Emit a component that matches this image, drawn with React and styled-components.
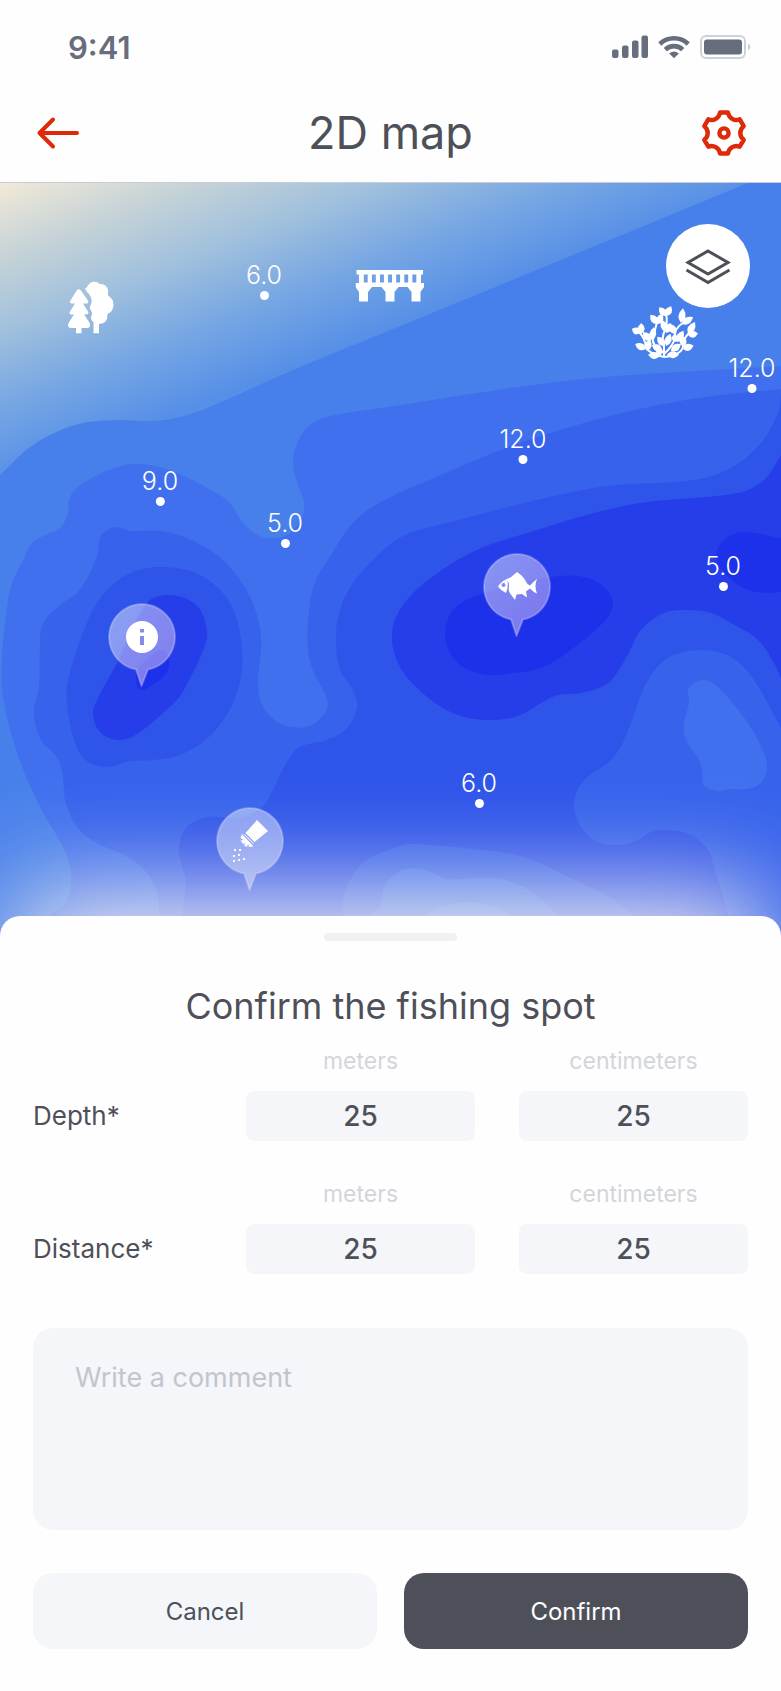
import React, { useState } from 'react'
import styled, { createGlobalStyle } from 'styled-components'

const GlobalStyle = createGlobalStyle`
  * {
    box-sizing: border-box;
  }
  body {
    margin: 0;
    background: #fefefe;
    color: #4e5059;
    font-family: Inter, 'Open Sans', sans-serif;
  }
  button, input, textarea {
    font-family: inherit;
    color: inherit;
  }
`

const Screen = styled.div`
  display: flex;
  flex-direction: column;
`

const StatusBar = styled.div`
  display: flex;
  align-items: center;
  justify-content: space-between;
  height: 83px;
  padding: 11px 30px 0 68px;
  color: #666d7d;
`

const Clock = styled.span`
  font-size: 31px;
  font-weight: 600;
`

const StatusIcons = styled.div`
  display: flex;
  align-items: center;
  gap: 10px;
`

const Header = styled.header`
  display: flex;
  align-items: center;
  justify-content: space-between;
  height: 100px;
  padding: 0 34px;
  border-bottom: 1px solid #c9ccd6;
`

const PageTitle = styled.h1`
  margin: 0;
  font-size: 45px;
  font-weight: 400;
`

const IconButton = styled.button`
  display: flex;
  padding: 0;
  border: none;
  background: none;
  color: #de2a0a;
  cursor: pointer;
`

const MapArea = styled.section`
  position: relative;
`

const MapDrawing = styled.svg`
  display: block;
  width: 100%;
  height: auto;
`

// x and y are in map units, see MAP_WIDTH and MAP_HEIGHT
const Placed = styled.div`
  position: absolute;
  left: ${({ $x }) => ($x / MAP_WIDTH) * 100}%;
  top: ${({ $y }) => ($y / MAP_HEIGHT) * 100}%;
`

const Landmark = styled(Placed)`
  display: flex;
  transform: translate(-50%, -50%);
`

const DepthMark = styled(Placed)`
  display: flex;
  flex-direction: column;
  align-items: center;
  gap: 1px;
  transform: translate(-50%, -100%);
  color: white;
  font-size: 25px;
  font-weight: 300;
  line-height: 30px;
  &::after {
    content: '';
    width: 9px;
    height: 9px;
    border-radius: 50%;
    background: white;
  }
`

const PinButton = styled(Placed)`
  display: flex;
  padding: 0;
  border: none;
  background: none;
  transform: translate(-50%, -100%);
  cursor: pointer;
`

const LayersButton = styled.button`
  position: absolute;
  top: 41px;
  right: 31px;
  display: flex;
  align-items: center;
  justify-content: center;
  width: 84px;
  height: 84px;
  padding: 0;
  border: none;
  border-radius: 50%;
  background: white;
  cursor: pointer;
`

const Sheet = styled.form`
  position: relative;
  display: flex;
  flex-direction: column;
  margin-top: -24px;
  padding: 17px 33px 42px;
  border-radius: 20px 20px 0 0;
  background: #fefefe;
  box-shadow: 0 -36px 104px -12px #f0edef;
`

const Handle = styled.div`
  align-self: center;
  width: 133px;
  height: 8px;
  border-radius: 4px;
  background: #eff1f3;
`

const SheetTitle = styled.h2`
  margin: 43px 0 21px;
  font-size: 36px;
  font-weight: 400;
  line-height: 44px;
  text-align: center;
`

const Measures = styled.div`
  display: flex;
  flex-direction: column;
  gap: 41px;
`

const MeasureRow = styled.div`
  display: grid;
  grid-template-columns: 169px 1fr 1fr;
  align-items: end;
  gap: 44px;
`

const MeasureName = styled.span`
  font-size: 26px;
  font-weight: 400;
  line-height: 50px;
`

const UnitField = styled.label`
  display: flex;
  flex-direction: column;
  gap: 18px;
  color: #d3d5db;
  font-size: 23px;
  font-weight: 400;
  line-height: 24px;
  text-align: center;
`

const UnitInput = styled.input`
  width: 100%;
  height: 50px;
  padding: 0;
  border: none;
  border-radius: 8px;
  background: #f4f6fa;
  color: #4e5059;
  font-size: 28px;
  font-weight: 500;
  text-align: center;
`

const Comment = styled.textarea`
  width: 100%;
  height: 202px;
  margin-top: 54px;
  padding: 33px 42px;
  border: none;
  border-radius: 20px;
  background: #f4f6fa;
  font-size: 27px;
  line-height: 34px;
  resize: none;
  &::placeholder {
    color: #c2c5cd;
    opacity: 1;
  }
`

const Actions = styled.div`
  display: grid;
  grid-template-columns: 1fr 1fr;
  gap: 27px;
  margin-top: 43px;
`

const ActionButton = styled.button`
  height: 76px;
  border: none;
  border-radius: 20px;
  background: ${({ $primary }) => ($primary ? '#4e5059' : '#f4f6fa')};
  color: ${({ $primary }) => ($primary ? '#fefefe' : '#4e5059')};
  font-size: 24px;
  font-weight: 400;
  cursor: pointer;
`

const MAP_WIDTH = 781
const MAP_HEIGHT = 757

// turns a list of points into a rounded line that goes through all of them
const smooth = (points, closed) => {
  const n = points.length
  const at = (i) => (closed ? points[(i + n) % n] : points[Math.max(0, Math.min(n - 1, i))])
  let d = `M${points[0].join(' ')}`
  for (let i = 0; i < (closed ? n : n - 1); i++) {
    const [p0, p1, p2, p3] = [at(i - 1), at(i), at(i + 1), at(i + 2)]
    // handles scale with the segment, so uneven points don't make loops
    const len = Math.hypot(p2[0] - p1[0], p2[1] - p1[1])
    const t1 = Math.hypot(p2[0] - p0[0], p2[1] - p0[1]) || 1
    const t2 = Math.hypot(p3[0] - p1[0], p3[1] - p1[1]) || 1
    const c = [
      p1[0] + ((p2[0] - p0[0]) / t1) * len * 0.34,
      p1[1] + ((p2[1] - p0[1]) / t1) * len * 0.34,
      p2[0] - ((p3[0] - p1[0]) / t2) * len * 0.34,
      p2[1] - ((p3[1] - p1[1]) / t2) * len * 0.34
    ]
    d += `C${c.map((v) => v.toFixed(1)).join(' ')} ${p2.join(' ')}`
  }
  return closed ? d + 'Z' : d
}

const levels = ['#4880eb', '#4070ee', '#3662ec', '#2e54ea', '#263eea', '#1e31ea']

// `end` closes an open contour along the edges of the map
const contours = [
  {
    level: 0,
    end: 'H781V940H0Z',
    points: [[0, 475], [33, 445], [75, 425], [117, 420], [153, 421], [180, 417], [207, 408], [293, 370], [381, 334], [748, 183]]
  },
  {
    level: 1,
    end: 'V940H40Z',
    points: [
      [40, 930], [50, 916], [67, 900], [71, 873], [63, 847], [40, 807], [17, 753], [3, 697], [2, 657], [7, 607], [12, 583],
      [23, 560], [32, 543], [47, 534], [60, 528], [68, 513], [69, 499], [80, 485], [117, 467], [143, 464], [177, 473], [223, 497], [233, 507],
      [243, 523], [263, 537], [287, 535], [302, 517], [304, 502], [298, 485], [293, 463], [297, 443], [310, 425],
      [330, 416], [381, 408], [574, 380], [781, 366]
    ]
  },
  {
    level: 2,
    end: 'V940Z',
    points: [
      [159, 940], [159, 916], [158, 897], [150, 877], [130, 858], [97, 843], [77, 827], [65, 800], [63, 777], [57, 757], [43, 743],
      [36, 727], [34, 710], [39, 687], [40, 643], [43, 623], [60, 605], [77, 593], [90, 573], [98, 553], [99, 541], [104, 532],
      [117, 527], [130, 531], [160, 531], [187, 538], [223, 560], [250, 597], [261, 637], [258, 687], [263, 707],
      [277, 722], [292, 727], [310, 726], [325, 713], [328, 703], [323, 690], [312, 668], [308, 650], [308, 623],
      [314, 585], [328, 560], [353, 523], [381, 502], [441, 475], [514, 445], [614, 415], [698, 398], [781, 389]
    ]
  },
  {
    level: 3,
    end: 'V940Z',
    points: [
      [181, 940], [182, 916], [186, 883], [182, 865], [179, 847], [187, 827], [207, 817], [240, 818], [263, 806], [273, 790],
      [287, 762], [300, 747], [327, 740], [347, 728], [357, 707], [353, 690], [340, 670], [336, 637], [340, 610],
      [353, 583], [377, 556], [401, 537], [431, 527], [594, 488], [694, 480], [731, 468], [761, 443], [778, 413], [781, 397]
    ]
  },
  {
    level: 3,
    points: [
      [163, 567], [200, 575], [230, 603], [242, 650], [237, 693], [213, 733], [180, 755], [153, 760], [130, 761], [107, 767],
      [87, 761], [75, 743], [67, 703], [68, 680], [88, 620], [107, 590], [133, 572]
    ]
  },
  {
    level: 4,
    points: [
      [170, 595], [197, 606], [207, 632], [202, 653], [185, 688], [175, 702], [137, 734], [118, 740], [100, 732], [93, 713],
      [97, 700], [117, 663], [147, 603]
    ]
  },
  { level: 5, points: [[160, 650], [169, 658], [166, 674], [148, 688], [142, 690], [137, 686], [138, 670]] },
  {
    level: 4,
    end: 'V455Z',
    points: [
      [781, 455], [764, 480], [738, 493], [628, 505], [504, 540], [481, 548], [451, 564], [414, 592], [396, 617], [392, 640],
      [398, 663], [411, 682], [438, 705], [464, 717], [491, 720], [518, 716], [541, 703], [558, 695], [581, 693],
      [608, 683], [626, 658], [641, 630], [664, 613], [688, 610], [711, 613], [731, 623], [758, 640], [774, 663], [781, 678]
    ]
  },
  {
    level: 5,
    points: [
      [551, 577], [584, 577], [604, 587], [613, 603], [604, 622], [561, 657], [538, 669], [514, 673], [488, 675], [461, 666],
      [446, 643], [448, 619], [458, 605], [484, 593]
    ]
  },
  { level: 5, end: 'Z', points: [[781, 538], [741, 532], [724, 540], [716, 557], [728, 577], [748, 590], [768, 593], [781, 592]] },
  {
    level: 2,
    end: 'H781V728Z',
    points: [
      [781, 728], [754, 680], [731, 657], [699, 650], [668, 658], [648, 680], [624, 740], [611, 760], [584, 780], [574, 803],
      [581, 827], [598, 842], [618, 845], [638, 840], [651, 832], [668, 830], [691, 835], [708, 850], [714, 867],
      [724, 900], [735, 940]
    ]
  },
  {
    level: 1,
    points: [
      [704, 680], [718, 687], [748, 723], [764, 753], [767, 770], [761, 783], [748, 789], [731, 789], [719, 791], [704, 785],
      [702, 770], [698, 758], [686, 740], [684, 723], [689, 703], [688, 690], [694, 683]
    ]
  },
  {
    level: 2,
    end: 'Z',
    points: [
      [345, 940], [343, 900], [350, 880], [367, 860], [400, 846], [411, 844], [464, 848], [524, 857], [568, 877],
      [614, 900], [660, 940]
    ]
  },
  {
    level: 1,
    end: 'Z',
    points: [
      [350, 940], [370, 916], [380, 907], [384, 887], [398, 872], [414, 868], [431, 872], [448, 879], [494, 878],
      [524, 887], [544, 902], [580, 940]
    ]
  },
  { level: 0, end: 'Z', points: [[400, 940], [424, 916], [441, 907], [468, 902], [494, 907], [511, 916], [530, 940]] }
]

const depthMarks = [
  { x: 264, y: 117, depth: '6.0' },
  { x: 160, y: 323, depth: '9.0' },
  { x: 285, y: 365, depth: '5.0' },
  { x: 523, y: 281, depth: '12.0' },
  { x: 752, y: 210, depth: '12.0' },
  { x: 723, y: 408, depth: '5.0' },
  { x: 479, y: 625, depth: '6.0' }
]

// x, y, angle, length
const leaves = [
  [41, 16, -38, 11], [41, 16, 28, 11],
  [33, 24, -40, 12], [33, 24, 22, 11],
  [56, 23, 8, 15], [57, 24, 58, 13],
  [15, 33, -62, 9], [16, 34, 2, 11],
  [26, 41, -42, 12], [27, 40, 8, 13],
  [21, 49, -65, 12], [22, 51, 12, 12],
  [41, 32, -18, 13], [41, 33, 25, 11],
  [40, 46, -40, 12], [41, 46, 20, 13],
  [50, 34, -25, 11], [52, 42, 30, 13], [51, 42, -15, 8],
  [63, 34, 30, 14], [63, 35, 82, 10],
  [59, 47, -10, 12], [58, 49, 72, 11],
  [35, 56, -84, 12], [36, 55, -25, 8], [42, 55, 88, 12],
  [37, 50, -65, 11], [46, 51, 55, 12]
]

const PIN_PATH = 'M28 66.500A33 33 0 1 1 40 66.500L33.500 83Z'

const Pin = ({ x, y, label, tint, children }) => (
  <PinButton as='button' type='button' $x={x} $y={y} aria-label={label}>
    <svg width='68' height='84' viewBox='0 0 68 84' fill='white'>
      <path d={PIN_PATH} fill={tint} fillOpacity='0.44' stroke='white' strokeOpacity='0.24' strokeWidth='2' />
      {children}
    </svg>
  </PinButton>
)

const Contours = () => (
  <MapDrawing viewBox='0 183 781 757' aria-hidden='true'>
    <defs>
      <linearGradient id='shore' gradientUnits='userSpaceOnUse' x1='0' y1='183' x2='102' y2='443'>
        <stop offset='0' stopColor='#f2e9d8' />
        <stop offset='0.25' stopColor='#c6d3d7' />
        <stop offset='0.5' stopColor='#a0c0dd' />
        <stop offset='0.75' stopColor='#76a6e3' />
        <stop offset='1' stopColor='#568fe7' />
      </linearGradient>
      <linearGradient id='pin-tint' x1='0' y1='0' x2='1' y2='1'>
        <stop offset='0.1' stopColor='#ffffff' />
        <stop offset='0.7' stopColor='#f8dcf6' />
      </linearGradient>
    </defs>
    <rect y='183' width='781' height='757' fill='url(#shore)' />
    {contours.map(({ level, points, end }, i) => (
      <path key={i} d={smooth(points, !end) + (end || '')} fill={levels[level]} />
    ))}
  </MapDrawing>
)

const TreesIcon = () => (
  <svg width='46' height='53' viewBox='0 0 46 53' fill='white'>
    <path d='M9 9.500Q10.500 8 12.500 9.500L20 20Q21 23 18.500 23H15L20 31Q21.500 34 18 34H16L22 43Q23 47.500 19 47.500H13.500V53H8V47.500H3Q-1 47.500 0.500 42.500L6 34H3.500Q0.500 34 2 31L7 23H3.500Q1 22.500 2.500 20Z' />
    <path d='M17 8Q19 7 20 5A7 7 0 0 1 31.500 3.500Q39 3 40 10V15Q45.500 18 45.500 25Q45 31 39.500 33.500Q40 43 31 43.500V53H25.500V42Q22.500 40 23 36Q25 33 23 30Q20.500 27 23 24Q25 18 21 13.500Q19 12 17 8Z' />
  </svg>
)

const BridgeIcon = () => (
  <svg width='69' height='32' viewBox='0 0 69 32' fill='white'>
    <path
      fillRule='evenodd'
      d={
        'M1 0H67.500V4.500H65.500V13H68.500V17L65 22V31.500H56V22L52 17H43L39 22V31.500H30V22L26 17H16.500L12.500 22V31.500H3.500V22L0 17V13H3.500V4.500H1Z' +
        [0, 1, 2, 3, 4, 5, 6].map((i) => `M${8.3 + i * 8.1} 4.500h3.900v8h-3.900Z`).join('')
      }
    />
  </svg>
)

const SeaweedIcon = () => (
  <svg width='76' height='62' viewBox='0 0 76 62'>
    <g fill='none' stroke='white' strokeWidth='2'>
      <path d='M39 57V47Q36 38 40 30Q43 22 41 14' />
      <path d='M39 53Q26 45 28 38Q30 30 32 22' />
      <path d='M39 57Q24 54 21 47Q20 38 14 32' />
      <path d='M39 54Q48 46 50 38Q49 28 58 23' />
      <path d='M39 57Q56 55 58 47Q58 39 64 33' />
    </g>
    {leaves.map(([x, y, angle, length], i) => (
      <path
        key={i}
        fill='white'
        transform={`translate(${x} ${y}) rotate(${angle})`}
        d={`M0 0Q-7 ${-length * 0.45} 0 ${-length}Q7 ${-length * 0.45} 0 0Z`}
      />
    ))}
  </svg>
)

const LayersIcon = () => (
  <svg width='46' height='38' viewBox='0 0 46 38' fill='none' stroke='#4e5059' strokeWidth='3'>
    <path d='M23 4L43 15.500L23 27L3 15.500Z' />
    <path d='M1.500 23L23 35.500L44.500 23' />
  </svg>
)

const GearIcon = () => (
  <svg width='46' height='46' viewBox='-23 -23 46 46' fill='none' stroke='currentColor' strokeLinejoin='round'>
    <path
      strokeWidth='4.400'
      d='M-4 -20.500H4A8.500 8.500 0 0 0 15.700 -13.700L19.700 -6.800A8.500 8.500 0 0 0 19.700 6.800L15.700 13.700A8.500 8.500 0 0 0 4 20.500H-4A8.500 8.500 0 0 0 -15.700 13.700L-19.700 6.800A8.500 8.500 0 0 0 -19.700 -6.800L-15.700 -13.700A8.500 8.500 0 0 0 -4 -20.500Z'
    />
    <circle r='4.600' strokeWidth='4.400' />
  </svg>
)

const MeasureFields = ({ id, name, value, onChange }) => (
  <MeasureRow role='group' aria-labelledby={id}>
    <MeasureName id={id}>{name}*</MeasureName>
    {['meters', 'centimeters'].map((unit) => (
      <UnitField key={unit} htmlFor={`${id}-${unit}`}>
        {unit}
        <UnitInput
          id={`${id}-${unit}`}
          inputMode='numeric'
          value={value[unit]}
          onChange={(e) => onChange({ ...value, [unit]: e.target.value })}
        />
      </UnitField>
    ))}
  </MeasureRow>
)

const App = () => {
  const [depth, setDepth] = useState({ meters: '25', centimeters: '25' })
  const [distance, setDistance] = useState({ meters: '25', centimeters: '25' })
  const [comment, setComment] = useState('')

  return (
    <Screen>
      <GlobalStyle />
      <StatusBar>
        <Clock>9:41</Clock>
        <StatusIcons>
          <svg width='36' height='24' viewBox='0 0 36 24' fill='currentColor'>
            <rect y='14.500' width='6.500' height='8.500' rx='2' />
            <rect x='10' y='10.500' width='6.500' height='12.500' rx='2' />
            <rect x='20' y='5.500' width='6.500' height='17.500' rx='2' />
            <rect x='29.500' y='0.500' width='6.500' height='22.500' rx='2' />
          </svg>
          <svg width='32' height='24' viewBox='0 0 32 24' fill='none' stroke='currentColor' strokeWidth='4.600'>
            <path d='M1.800 9A20.500 20.500 0 0 1 30.200 9' />
            <path d='M7.300 14.600A12.600 12.600 0 0 1 24.700 14.600' />
            <path d='M16 23.200L11.200 18.400Q16 14.600 20.800 18.400Z' fill='currentColor' stroke='none' />
          </svg>
          <svg width='51' height='24' viewBox='0 0 51 24'>
            <rect x='1' y='1' width='44' height='22' rx='5' fill='none' stroke='#cfd1d7' strokeWidth='2' />
            <rect x='4' y='4.500' width='38' height='15' rx='3' fill='currentColor' />
            <path d='M48 8.500Q50.500 9.500 50.500 12T48 15.500Z' fill='#cfd1d7' />
          </svg>
        </StatusIcons>
      </StatusBar>
      <Header>
        <IconButton type='button' aria-label='Back'>
          <svg width='46' height='46' viewBox='0 0 46 46' fill='none' stroke='currentColor' strokeWidth='4' strokeLinecap='round' strokeLinejoin='round'>
            <path d='M19 9.500L5.500 23L19 36.500M5.500 23H43' />
          </svg>
        </IconButton>
        <PageTitle>2D map</PageTitle>
        <IconButton type='button' aria-label='Settings'>
          <GearIcon />
        </IconButton>
      </Header>

      <MapArea>
        <Contours />
        <Landmark $x={91} $y={124}>
          <TreesIcon />
        </Landmark>
        <Landmark $x={390} $y={103}>
          <BridgeIcon />
        </Landmark>
        <Landmark $x={663} $y={148}>
          <SeaweedIcon />
        </Landmark>
        {depthMarks.map(({ x, y, depth }) => (
          <DepthMark key={`${x}-${y}`} $x={x} $y={y}>
            {depth}
          </DepthMark>
        ))}
        <Pin x={142} y={504} label='Information' tint='url(#pin-tint)'>
          <path fillRule='evenodd' d='M34 18A16 16 0 0 1 34 50A16 16 0 0 1 34 18ZM32 26V29.500H36V26ZM32 33V42H36V33Z' />
        </Pin>
        <Pin x={517} y={454} label='Fish' tint='url(#pin-tint)'>
          <g transform='translate(15 19)'>
            <path
              fillRule='evenodd'
              d='M0 14.500Q4 8 12.500 5.500L19 0Q25 4 27 8L29.500 12L32 13.500Q35 10 39 7Q36 14 39 21.500Q35 20 32 16.500L28 19.500L29 25.500L24 22L18.500 22.500L17 28L12.500 22Q10 20 11 14Q11 10 9.500 8.500Q10.500 16 8 21Q3 19 0 14.500ZM5.500 11A2 2 0 0 0 5.500 15A2 2 0 0 0 5.500 11Z'
            />
          </g>
        </Pin>
        <Pin x={250} y={708} label='Bait' tint='#ffffff'>
          <path d='M41 13L52 24L38.500 35L29.500 26Z' />
          <path d='M28.500 27.500L37.500 36.500M27 29.500L35.500 38' stroke='white' strokeWidth='1' />
          <path d='M26 27L37.500 39.500L33 40L32 37L31 40L28 38.500L29.500 36L27 37L24.500 33.500L27.500 33L24.500 31Z' />
          <path d='M18 42h2v2h-2ZM23 42h2v2h-2ZM17 48h2v2h-2ZM22 47h2v2h-2ZM17 53h2v2h-2ZM22 52h2v2h-2ZM27 51h2v2h-2Z' />
        </Pin>
        <LayersButton type='button' aria-label='Map layers'>
          <LayersIcon />
        </LayersButton>
      </MapArea>

      <Sheet onSubmit={(e) => e.preventDefault()}>
        <Handle />
        <SheetTitle>Confirm the fishing spot</SheetTitle>
        <Measures>
          <MeasureFields id='depth' name='Depth' value={depth} onChange={setDepth} />
          <MeasureFields id='distance' name='Distance' value={distance} onChange={setDistance} />
        </Measures>
        <Comment
          aria-label='Comment'
          placeholder='Write a comment'
          value={comment}
          onChange={(e) => setComment(e.target.value)}
        />
        <Actions>
          <ActionButton type='button'>Cancel</ActionButton>
          <ActionButton type='submit' $primary>
            Confirm
          </ActionButton>
        </Actions>
      </Sheet>
    </Screen>
  )
}

export default App
